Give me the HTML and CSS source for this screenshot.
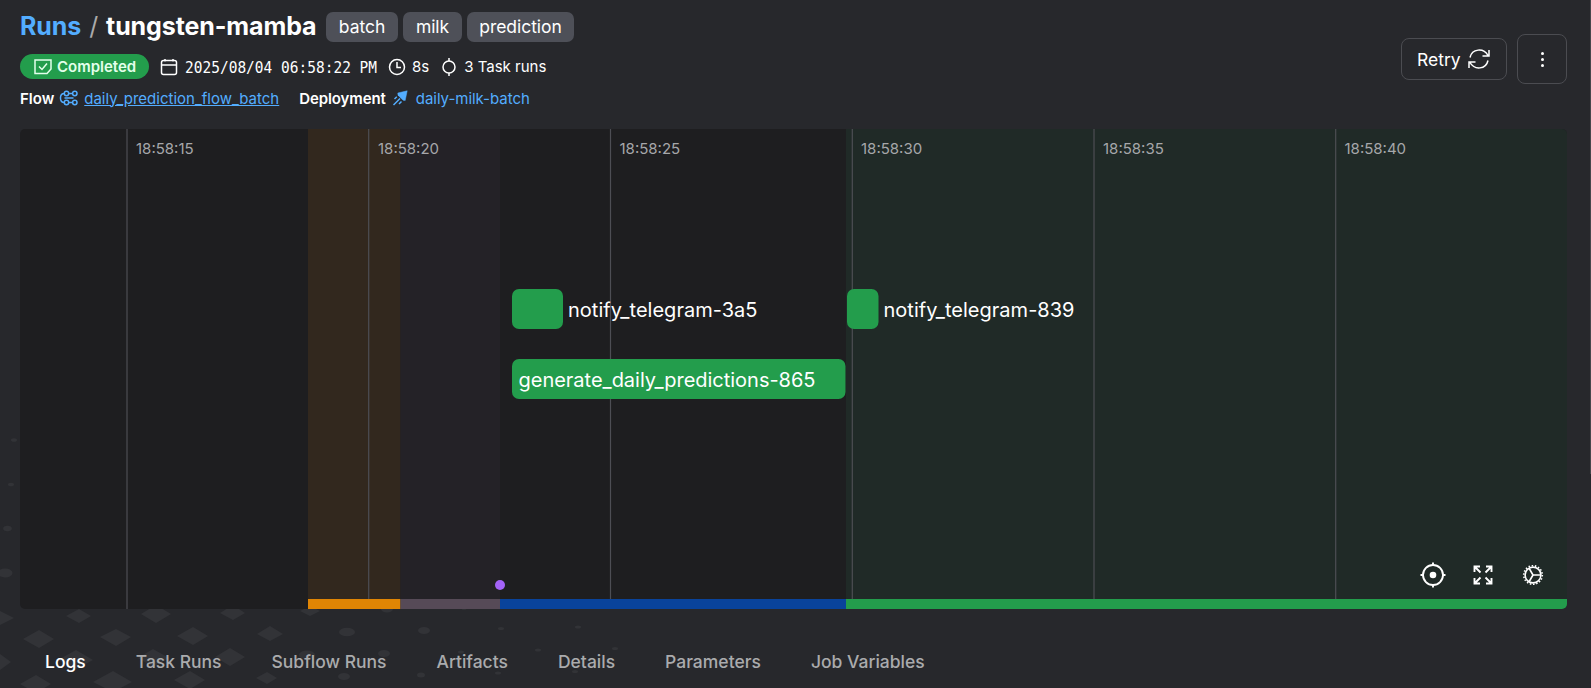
FILE: index.html
```html
<!DOCTYPE html>
<html lang="en">
<head>
<meta charset="utf-8">
<title>tungsten-mamba</title>
<link rel="stylesheet" href="styles.css">
</head>
<body>
<svg class="backdrop" viewBox="0 0 1591 688" aria-hidden="true">
  <path d="M0 611L14 618L0 625zM66 616L79 609L91 616L79 623zM141 614L156 605L171 614L156 623zM220 613L233 605L245 613L233 620zM300 611L310 606L320 611L310 616zM23 639L39 630L54 639L39 648zM100 637L116 629L131 637L116 646zM177 636L193 627L208 636L193 645zM257 634L270 626L283 634L270 641zM0 654L11 662L0 670zM58 660L76 650L93 660L76 669zM138 658L153 649L169 658L153 667zM215 657L230 648L245 657L230 666zM20 684L36 675L51 684L36 693zM93 682L113 671L132 682L113 692zM174 680L190 671L205 680L190 689zM256 678L267 672L277 678L267 684z"/>
  <ellipse cx="347" cy="632" rx="8" ry="4.3"/><ellipse cx="424" cy="630.500" rx="6" ry="3.500"/><ellipse cx="501" cy="628.500" rx="3" ry="1.500"/><ellipse cx="578" cy="627" rx="3" ry="1.500"/>
  <ellipse cx="307" cy="655" rx="8" ry="4.500"/><ellipse cx="384" cy="653.500" rx="6" ry="3.500"/><ellipse cx="461" cy="652" rx="3" ry="1.500"/><ellipse cx="538" cy="650" rx="3" ry="1.500"/><ellipse cx="615" cy="648.500" rx="3" ry="1.500"/>
  <ellipse cx="344" cy="676.500" rx="6" ry="3.500"/><ellipse cx="421" cy="675" rx="4" ry="2.500"/><ellipse cx="498" cy="673" rx="3" ry="1.500"/><ellipse cx="575" cy="671.500" rx="3" ry="1.500"/>
  <ellipse cx="387" cy="609" rx="6" ry="3.500"/><ellipse cx="464" cy="608" rx="3" ry="1.800"/>
  <ellipse cx="14" cy="440" rx="3" ry="1.800"/><ellipse cx="11" cy="484.500" rx="3" ry="1.800"/><ellipse cx="7.500" cy="528.500" rx="4.300" ry="2.700"/><ellipse cx="5" cy="573" rx="7.500" ry="4.500"/>
</svg>
<div class="scrollbar"></div>
<main class="page">
  <header class="header">
    <div class="heading">
      <div class="title-row">
        <h1 class="title"><a class="crumb">Runs</a><span class="slash">/</span><span>tungsten-mamba</span></h1>
        <span class="tag batch">batch</span><span class="tag milk">milk</span><span class="tag prediction">prediction</span>
      </div>
      <div class="meta-row">
        <span class="badge"><svg viewBox="0 0 20 18"><path d="M2 2h16v9l-4 4.500H2zM6 8.500l3 3 5-6"/></svg>Completed</span>
        <span class="meta date"><svg viewBox="0 0 18 18"><path d="M1.500 4.500q0-2 2-2h11q2 0 2 2v10q0 2-2 2h-11q-2 0-2-2zM1.500 7h15M5 1v2.500M13 1v2.500"/></svg><time>2025/08/04 06:58:22 PM</time></span>
        <span class="meta duration"><svg viewBox="0 0 18 18"><circle cx="9" cy="9" r="7.500"/><path d="M9 4v5.500h4"/></svg>8s</span>
        <span class="meta tasks"><svg viewBox="0 0 18 18"><circle cx="9" cy="9" r="6"/><path d="M9 0v3M9 15v3"/></svg>3 Task runs</span>
      </div>
      <div class="link-row">
        <b>Flow</b>
        <svg class="flow-icon" viewBox="0 0 20 16"><circle cx="7.500" cy="3.500" r="2.200"/><circle cx="15.800" cy="3.500" r="2.200"/><circle cx="7.500" cy="12.500" r="2.200"/><circle cx="15.800" cy="12.500" r="2.200"/><path d="M9.700 3.500h4M9.700 12.500h4M5.300 3.500C.2 3.500.2 12.500 5.300 12.500M5.500 8h9"/></svg>
        <a class="flow-link">daily_prediction_flow_batch</a>
        <b class="deployment">Deployment</b>
        <svg class="rocket" viewBox="0 0 16 16"><path class="body" d="M15.200.8L13.200 10.500 11 10.200 6 5.200 5.800 3z"/><path d="M4.800 6.800L2.500 9M8 8.500L1.500 15M9.500 11.500L7 14"/></svg>
        <a>daily-milk-batch</a>
      </div>
    </div>
    <div class="actions">
      <button class="retry">Retry<svg viewBox="0 0 22 20"><path d="M2 8.500C4-.5 15.500-1.500 20 6.500M21 1V7H14.500M20 11.500C18 20.500 6.500 21.500 2 13.500M1 19V13H7.500"/></svg></button>
      <button class="more"><i></i><i></i><i></i></button>
    </div>
  </header>

  <section class="timeline">
    <svg class="chart" viewBox="0 0 1547 480">
      <path fill="#32281e" d="M288 0h92.500v480H288z"/><path fill="#242227" d="M380.500 0H480v480h-99.500z"/><path fill="#202a27" d="M826 0h721v480H826z"/>
      <path class="grid" d="M107 0v480M348.700 0v470M590.500 0v470M832.300 0v470M1074 0v470M1315.700 0v470"/>
      <g class="ticks"><text x="116" y="25">18:58:15</text><text x="358" y="25">18:58:20</text><text x="599.500" y="25">18:58:25</text><text x="841" y="25">18:58:30</text><text x="1083" y="25">18:58:35</text><text x="1324.500" y="25">18:58:40</text></g>
      <path fill="#e08504" d="M288 470h92.500v10H288z"/><path fill="#564a57" d="M380.500 470H480v10h-99.500z"/><path fill="#09439b" d="M480 470h346v10H480z"/><path fill="#239d4c" d="M826 470h721v10H826z"/>
      <circle cx="480" cy="456" r="5" fill="#a463f8"/>
      <g class="nodes"><rect x="492" y="160" width="51" height="40" rx="7"/><rect x="827" y="160" width="31.500" height="40" rx="7"/><rect x="492" y="230" width="333.500" height="40" rx="7"/></g>
      <g class="labels"><text x="548" y="187.500" textLength="189.500">notify_telegram-3a5</text><text x="863.500" y="187.500" textLength="191">notify_telegram-839</text><text x="498.500" y="257.500" textLength="297">generate_daily_predictions-865</text></g>
    </svg>
    <div class="controls">
      <svg viewBox="0 0 26 26"><circle cx="13" cy="13" r="10"/><circle class="fill" cx="13" cy="13" r="3.300"/><path d="M13 .5V4M13 22v3.500M.5 13H4M22 13h3.500"/></svg>
      <svg viewBox="0 0 26 26"><path d="M4.500 10V4.500H10M4.500 4.500l6 6M16 4.500h5.500V10M21.500 4.500l-6 6M4.500 16v5.500H10M4.500 21.500l6-6M21.500 16v5.500H16M21.500 21.500l-6-6"/></svg>
      <svg class="gear" viewBox="0 0 26 26"><circle cx="13" cy="13" r="7.900"/><circle class="teeth" cx="13" cy="13" r="9.300"/><path d="M13 13h7.500M13 13L9.200 6.500M13 13l-3.800 6.500"/></svg>
    </div>
  </section>

  <nav class="tabs"><a class="active">Logs</a><a>Task Runs</a><a>Subflow Runs</a><a>Artifacts</a><a>Details</a><a>Parameters</a><a>Job Variables</a></nav>
</main>
</body>
</html>
```
FILE: styles.css
```css
* { box-sizing: border-box; }
body { margin: 0; height: 688px; overflow: hidden; background: #27282c; color: #fff; font-family: Inter, sans-serif; }
svg { fill: none; stroke: currentColor; stroke-width: 1.5; flex: none; }
.backdrop { position: absolute; inset: 0; width: 1591px; height: 688px; fill: #323337; stroke: none; }
.scrollbar { position: absolute; right: 0; top: 0; width: 1px; height: 474px; background: #46474b; }
.page { position: relative; padding: 0 24px 0 20px; }
.header { height: 129px; display: flex; justify-content: space-between; }
.heading { padding-top: 12px; }
.title-row { display: flex; height: 30px; align-items: center; gap: 5px; }
.title { display: flex; gap: 8px; width: 301px; margin: 0; padding-bottom: 2px; font-size: 25px; line-height: 28px; font-weight: 700; letter-spacing: -.1px; white-space: nowrap; }
.crumb, .link-row a { color: #53adff; }
.slash { color: #aaa; font-weight: 400; }
.tag { height: 30px; border-radius: 7px; background: #4e5058; font-size: 17.5px; line-height: 30px; text-align: center; letter-spacing: -.05px; }
.batch { width: 72px; }
.milk { width: 59px; }
.prediction { width: 107px; }
.title + .tag { margin-left: 0; }
.meta-row { display: flex; align-items: center; height: 25px; margin-top: 12px; font-size: 15px; }
.badge { display: flex; align-items: center; gap: 4px; width: 129px; height: 25px; padding-left: 13px; border-radius: 13px; background: #239d4c; color: #e3ffeb; font-weight: 600; }
.badge svg { width: 20px; height: 18px; }
.meta { display: flex; align-items: center; gap: 7px; }
.meta svg { width: 18px; height: 18px; }
.date { width: 217px; margin-left: 11px; }
.date time { font: 14.500px "DejaVu Sans Mono", monospace; white-space: nowrap; transform: scaleY(1.12); }
.duration { margin-left: 11px; gap: 6px; }
.tasks { margin-left: 11px; gap: 6px; }
.link-row { display: flex; align-items: center; height: 20px; margin-top: 9px; font-size: 15px; }
.link-row b { font-weight: 600; }
.flow-icon { width: 20px; height: 16px; margin: 0 5px; color: #53adff; }
.link-row .flow-link { text-decoration: underline; }
.deployment { margin-left: 20px; letter-spacing: -.1px; }
.rocket { width: 16px; height: 16px; margin: 0 8px 0 6px; color: #53adff; }
.rocket .body { fill: currentColor; stroke-width: .5; }
.rocket + a { letter-spacing: -.03px; }
.actions { display: flex; align-items: center; gap: 10px; height: 50px; margin-top: 34px; }
.actions button { display: flex; align-items: center; background: none; border: 1px solid #4b4c51; border-radius: 8px; color: #fff; font: 17.500px Inter, sans-serif; }
.retry { width: 106px; height: 42px; padding: 0 0 0 15px; gap: 7px; }
.retry svg { width: 22px; height: 20px; }
.actions .more { width: 50px; height: 50px; padding: 0; flex-direction: column; justify-content: center; gap: 3px; }
.more i { width: 3px; height: 3px; border-radius: 50%; background: #fff; }
.timeline { position: relative; height: 480px; border-radius: 5px; overflow: hidden; background: #1e1e20; }
.chart { display: block; width: 1547px; height: 480px; stroke: none; }
.grid { stroke: #4d4e54; stroke-width: 1.2; }
.ticks { fill: #a6a7aa; font-size: 15px; }
.nodes { fill: #239d4c; }
.labels { fill: #fff; font-size: 20px; }
.controls { position: absolute; right: 21.5px; bottom: 21.5px; display: flex; gap: 24px; }
.controls svg { width: 26px; height: 26px; stroke-width: 1.9; }
.controls .fill { fill: #fff; stroke: none; }
.controls .gear { stroke-width: 1.6; }
.controls .teeth { stroke-width: 1.6; stroke-dasharray: 1.500 1.746; }
.tabs { display: flex; gap: 50px; padding: 41px 25px 0; font-size: 17.500px; font-weight: 500; line-height: 24px; color: #aaabad; white-space: nowrap; }
.tabs .active { color: #fff; }
```
